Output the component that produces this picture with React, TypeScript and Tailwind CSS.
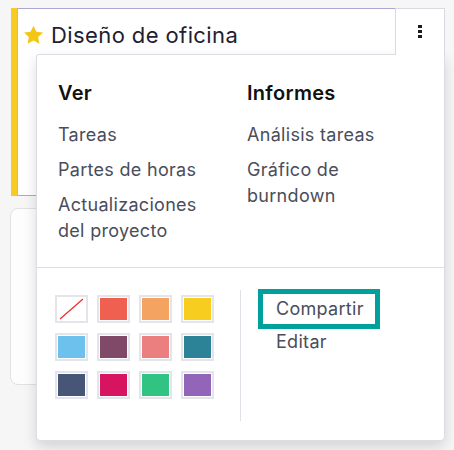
import React from 'react';

const swatches = [
  'none',
  'bg-[#f06050]',
  'bg-[#f4a460]',
  'bg-[#f7cd1f]',
  'bg-[#6cc1ed]',
  'bg-[#814968]',
  'bg-[#eb7e7f]',
  'bg-[#2c8397]',
  'bg-[#475577]',
  'bg-[#d6145f]',
  'bg-[#30c381]',
  'bg-[#9365b8]',
];

function Star() {
  return (
    <svg width="21" height="20" viewBox="0 0 24 23">
      <path
        d="M12 0.8l3.3 7 7.6 0.9-5.6 5.2 1.5 7.6L12 17.7l-6.8 3.8 1.5-7.6L1.1 8.7l7.6-0.9z"
        fill="#f3c614"
      />
    </svg>
  );
}

function Swatch({ color }: { color: string }) {
  return (
    <div className="w-[33px] h-[28px] border-2 border-[#e3e5ea] p-[1px] bg-white">
      {color === 'none' ? (
        <svg className="w-full h-full" viewBox="0 0 27 22">
          <line x1="2" y1="21" x2="25" y2="1" stroke="#ef2b2b" strokeWidth="1.2" />
        </svg>
      ) : (
        <div className={`w-full h-full ${color}`} />
      )}
    </div>
  );
}

export default function App() {
  return (
    <div className="relative w-[454px] h-[450px] overflow-hidden bg-[#f6f6f6] font-['Inter',sans-serif]">
      <div className="flex flex-col gap-[12px] pt-[8px]">
        {/* project card */}
        <div className="ml-[11px] w-[434px] h-[188px] flex bg-white">
          <div className="w-[6px] bg-[#f8cb22]" />
          <div className="flex-1 border border-[#aaa7d2] border-l-[#b9b7d6]">
            <div className="flex items-center h-[52px] pl-[5px] gap-[7px]">
              <Star />
              <span className="text-[22px] leading-[28px] tracking-[0.4px] text-[#1f2030]">Diseño de oficina</span>
            </div>
          </div>
        </div>
        {/* next card */}
        <div className="ml-[10px] w-[300px] h-[177px] rounded-[8px] border border-[#e1e1e1] bg-[#fdfdfd]" />
      </div>

      {/* dropdown toggle */}
      <div className="absolute left-[395px] top-[8px] w-[50px] h-[47px] z-20 bg-white border border-b-0 border-[#d9d9e0] flex justify-center pt-[16px]">
        <div className="flex flex-col gap-[2px]">
          <div className="w-[4px] h-[3px] bg-[#1c1c1c]" />
          <div className="w-[4px] h-[3px] bg-[#1c1c1c]" />
          <div className="w-[4px] h-[3px] bg-[#1c1c1c]" />
        </div>
      </div>

      {/* dropdown menu */}
      <div className="absolute left-[36px] top-[54px] w-[409px] h-[387px] z-10 bg-white border border-[#dcdce3] rounded-b-[4px] rounded-tl-[3px] shadow-[0_6px_14px_rgba(0,0,0,0.14)] flex flex-col">
        <div className="flex pl-[21px] pt-[26px] h-[212px]">
          <div className="w-[189px] pr-[35px] flex flex-col">
            <div className="text-[20px] leading-[24px] tracking-[0.3px] font-semibold text-[#111]">Ver</div>
            <div className="flex flex-col gap-[9px] mt-[17px] text-[18px] leading-[26px] tracking-[0.3px] text-[#4a4d5a]">
              <div>Tareas</div>
              <div>Partes de horas</div>
              <div>Actualizaciones del proyecto</div>
            </div>
          </div>
          <div className="w-[170px] flex flex-col">
            <div className="text-[20px] leading-[24px] tracking-[0.3px] font-semibold text-[#111]">Informes</div>
            <div className="flex flex-col gap-[9px] mt-[17px] text-[18px] leading-[26px] tracking-[0.3px] text-[#4a4d5a]">
              <div>Análisis tareas</div>
              <div>Gráfico de burndown</div>
            </div>
          </div>
        </div>
        <div className="border-t border-[#dedee5] flex pl-[18px] pt-[21px] pb-[19px] flex-1">
          <div className="grid grid-cols-[repeat(4,33px)] gap-x-[9px] gap-y-[10px] content-start mt-[6px]">
            {swatches.map((c, i) => (
              <Swatch key={i} color={c} />
            ))}
          </div>
          <div className="w-px bg-[#dee1e6] ml-[26px] mt-[1px]" />
          <div className="ml-[17px] flex flex-col items-start text-[18px] tracking-[0.3px] text-[#4a4d5a]">
            <div className="h-[40px] border-[5px] border-[#00a09d] pl-[13px] pr-[11px] leading-[30px]">Compartir</div>
            <div className="px-[18px] leading-[26px]">Editar</div>
          </div>
        </div>
      </div>
    </div>
  );
}
